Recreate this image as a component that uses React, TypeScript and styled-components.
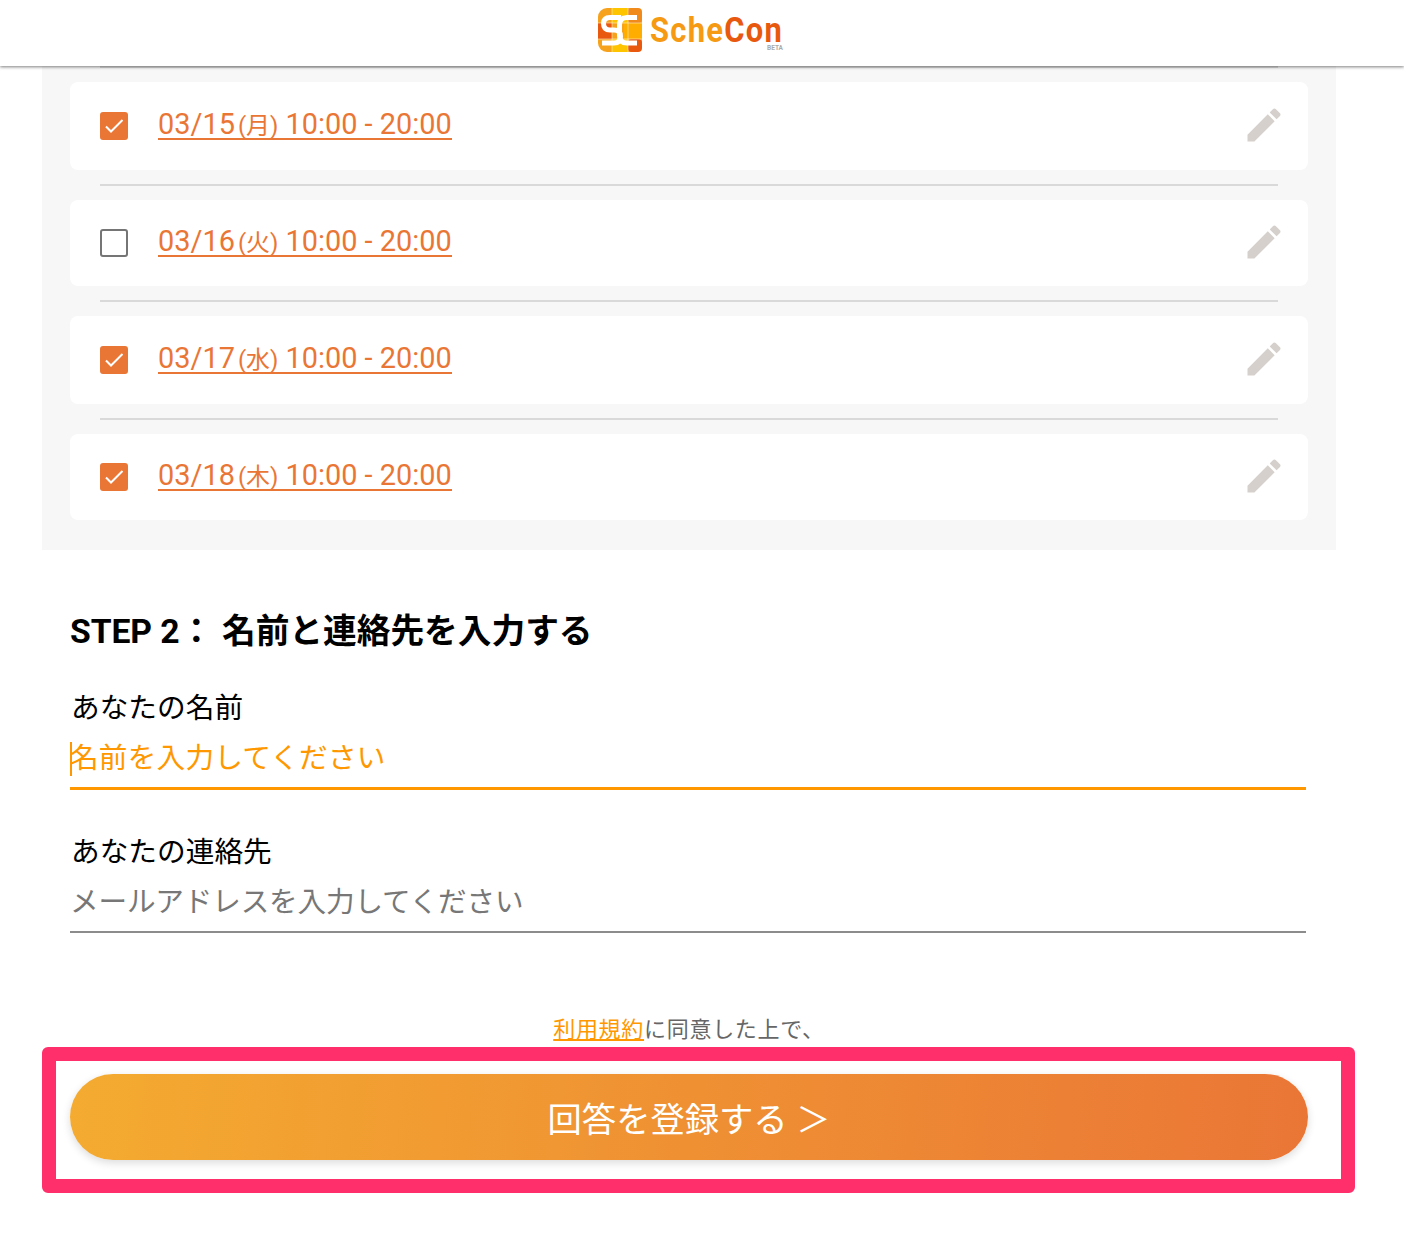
import React from 'react';
import styled, { createGlobalStyle } from 'styled-components';

const GlobalStyle = createGlobalStyle`
  body {
    margin: 0;
    background: #fff;
    font-family: Roboto, "Noto Sans CJK JP", sans-serif;
  }
`;

const Page = styled.div`
  position: relative;
  width: 1404px;
  height: 1252px;
  overflow: hidden;
`;

const Header = styled.header`
  position: relative;
  z-index: 2;
  height: 66px;
  display: flex;
  justify-content: center;
  background: #fff;
  box-shadow: 0 1px 3px rgba(0, 0, 0, 0.5);
`;

const LogoWrap = styled.div`
  display: flex;
  align-items: flex-start;
  gap: 8px;
  margin-top: 8px;
  margin-left: -22px;
`;

const LogoText = styled.div`
  position: relative;
  box-sizing: border-box;
  width: 134px;
  height: 44px;
  padding-top: 7px;
  font-family: Roboto, sans-serif;
  font-size: 35.5px;
  font-weight: 700;
  line-height: 30px;
  letter-spacing: 1.5px;
  color: #f59a12;
`;

const LogoWord = styled.span`
  display: inline-block;
  transform: scaleX(0.87);
  transform-origin: left center;
  white-space: nowrap;
`;

const LogoDark = styled.span`
  color: #e8590f;
`;

const Beta = styled.span`
  position: absolute;
  right: 1px;
  bottom: 0;
  font-size: 6.5px;
  line-height: 7px;
  letter-spacing: 0;
  color: #aaa;
`;

const Panel = styled.section`
  width: 1238px;
  margin-left: 42px;
  padding: 0 28px 30px;
  background: #f7f7f7;
`;

const Card = styled.div<{ $h: number }>`
  height: ${(p) => p.$h}px;
  display: flex;
  align-items: center;
  padding: 0 22px 0 30px;
  background: #fff;
  border-radius: 8px;
`;

const Divider = styled.hr<{ $first?: boolean }>`
  height: 2px;
  margin: ${(p) => (p.$first ? '0 30px 14px' : '14px 30px')};
  border: 0;
  background: #d9d9d9;
`;

const CheckBox = styled.span<{ $checked: boolean }>`
  box-sizing: border-box;
  width: 28px;
  height: 28px;
  display: flex;
  align-items: center;
  justify-content: center;
  border-radius: 3px;
  border: ${(p) => (p.$checked ? '0' : '2px solid #757575')};
  background: ${(p) => (p.$checked ? '#ea7636' : '#fff')};
`;

const DateLink = styled.a`
  margin: 0 0 2px 30px;
  font-size: 28.9px;
  line-height: 28px;
  color: #ea7636;
  border-bottom: 2px solid #ea7636;
  white-space: nowrap;
`;

const Weekday = styled.small`
  font-size: 24px;
  line-height: 0;
  margin: 0 7px 0 3px;
`;

const EditIcon = styled.svg`
  width: 44px;
  height: 44px;
  margin: 0 0 3px auto;
  fill: #d5d0cb;
`;

const Form = styled.section`
  margin-left: 70px;
  width: 1238px;
`;

const StepTitle = styled.h2`
  margin: 58px 0 0;
  font-size: 33.7px;
  line-height: 48px;
  font-weight: 700;
  color: #000;
  white-space: nowrap;
`;

const StepLabel = styled.span`
  margin-right: 9px;
  letter-spacing: -0.1px;
`;

const Field = styled.label`
  display: block;
  width: 1236px;
  margin-top: 29px;
  & + & {
    margin-top: 39px;
  }
`;

const FieldLabel = styled.span`
  display: block;
  padding-left: 1px;
  font-size: 28.7px;
  line-height: 46px;
  color: #000;
`;

const InputWrap = styled.div<{ $focused?: boolean }>`
  position: relative;
  height: 54px;
  padding-top: 2px;
  border-bottom: ${(p) => (p.$focused ? '3px solid #ff9800' : '2px solid #8c8c8c')};
`;

const Input = styled.input<{ $focused?: boolean }>`
  width: 100%;
  height: 50px;
  padding: 0;
  border: 0;
  outline: 0;
  background: transparent;
  font-family: Roboto, "Noto Sans CJK JP", sans-serif;
  font-size: 28.6px;
  letter-spacing: ${(p) => (p.$focused ? '0.25px' : '-0.15px')};
  &::placeholder {
    opacity: 1;
    color: ${(p) => (p.$focused ? '#ff9800' : '#777')};
  }
`;

const Caret = styled.i`
  position: absolute;
  left: 0;
  top: 11px;
  width: 2px;
  height: 34px;
  background: #ff9800;
`;

const Terms = styled.p`
  margin: 81px 0 0;
  text-align: center;
  font-size: 22px;
  line-height: 32px;
  letter-spacing: 0.7px;
  color: #666;
`;

const TermsLink = styled.a`
  color: #ff9800;
  text-decoration: underline;
`;

const SubmitButton = styled.button`
  display: block;
  width: 1238px;
  height: 86px;
  margin-top: 28px;
  padding: 0;
  border: 0;
  border-radius: 43px;
  background: linear-gradient(95deg, #f4ab30 0%, #ea7636 100%);
  box-shadow: 0 3px 8px rgba(0, 0, 0, 0.14);
  font-family: Roboto, "Noto Sans CJK JP", sans-serif;
  font-size: 34.3px;
  color: #fff;
`;

const Highlight = styled.div`
  position: absolute;
  left: 42px;
  top: 1047px;
  box-sizing: border-box;
  width: 1313px;
  height: 146px;
  border: 14px solid #ff2f6c;
  border-radius: 6px;
  pointer-events: none;
`;

const Logo = () => (
  <svg width="44" height="44" viewBox="0 0 44 44">
    <rect width="44" height="44" rx="9" fill="#f6a21c" />
    <rect x="14" width="16" height="44" fill="#ffc400" />
    <rect x="30" width="14" height="15" rx="4" fill="#f08a1c" />
    <rect y="15" width="14" height="16" fill="#e8590f" />
    <rect x="14" y="15" width="16" height="16" fill="#f6a21c" />
    <rect x="26" y="15" width="18" height="16" fill="#ffad00" />
    <rect x="30" y="31" width="14" height="13" rx="4" fill="#e8590f" />
    <path d="M14 0 V44 M30 0 V44 M0 15 H44 M0 31 H44" stroke="#fff" strokeOpacity="0.6" strokeWidth="0.8" />
    <path d="M23 9.5 H12 Q5.5 9.5 5.5 15.5 Q5.5 22 12 22 H16 Q22.5 22 22.5 28.5 Q22.5 35 16 35 H4" fill="none" stroke="#fff" strokeWidth="5" />
    <path d="M39 9.5 H29 Q21.5 9.5 21.5 17 V27.5 Q21.5 35 29 35 H39" fill="none" stroke="#fff" strokeWidth="5" />
  </svg>
);

const Pencil = () => (
  <EditIcon viewBox="0 0 24 24">
    <path d="M3 17.25V21h3.75L17.81 9.94l-3.75-3.75L3 17.25zM20.71 7.04c.39-.39.39-1.02 0-1.41l-2.34-2.34c-.39-.39-1.02-.39-1.41 0l-1.83 1.83 3.75 3.75 1.83-1.83z" />
  </EditIcon>
);

const rows = [
  { date: '03/15', day: '月', checked: true, h: 88 },
  { date: '03/16', day: '火', checked: false, h: 86 },
  { date: '03/17', day: '水', checked: true, h: 88 },
  { date: '03/18', day: '木', checked: true, h: 86 },
];

const App: React.FC = () => (
  <Page>
    <GlobalStyle />
    <Header>
      <LogoWrap>
        <Logo />
        <LogoText>
          <LogoWord>
            Sche<LogoDark>Con</LogoDark>
          </LogoWord>
          <Beta>BETA</Beta>
        </LogoText>
      </LogoWrap>
    </Header>
    <Panel>
      <Divider $first />
      {rows.map((row, i) => (
        <React.Fragment key={row.date}>
          {i > 0 && <Divider />}
          <Card $h={row.h}>
            <CheckBox $checked={row.checked}>
              {row.checked && (
                <svg width="20" height="16" viewBox="0 0 20 16">
                  <path d="M2 8.5 L7 13.5 L18.5 2" fill="none" stroke="#fff" strokeWidth="2" />
                </svg>
              )}
            </CheckBox>
            <DateLink>
              {row.date}
              <Weekday>({row.day})</Weekday>
              10:00 - 20:00
            </DateLink>
            <Pencil />
          </Card>
        </React.Fragment>
      ))}
    </Panel>
    <Form>
      <StepTitle>
        <StepLabel>STEP 2：</StepLabel>名前と連絡先を入力する
      </StepTitle>
      <Field>
        <FieldLabel>あなたの名前</FieldLabel>
        <InputWrap $focused>
          <Input $focused placeholder="名前を入力してください" />
          <Caret />
        </InputWrap>
      </Field>
      <Field>
        <FieldLabel>あなたの連絡先</FieldLabel>
        <InputWrap>
          <Input placeholder="メールアドレスを入力してください" />
        </InputWrap>
      </Field>
      <Terms>
        <TermsLink>利用規約</TermsLink>に同意した上で、
      </Terms>
      <SubmitButton>回答を登録する ＞</SubmitButton>
    </Form>
    <Highlight />
  </Page>
);

export default App;
